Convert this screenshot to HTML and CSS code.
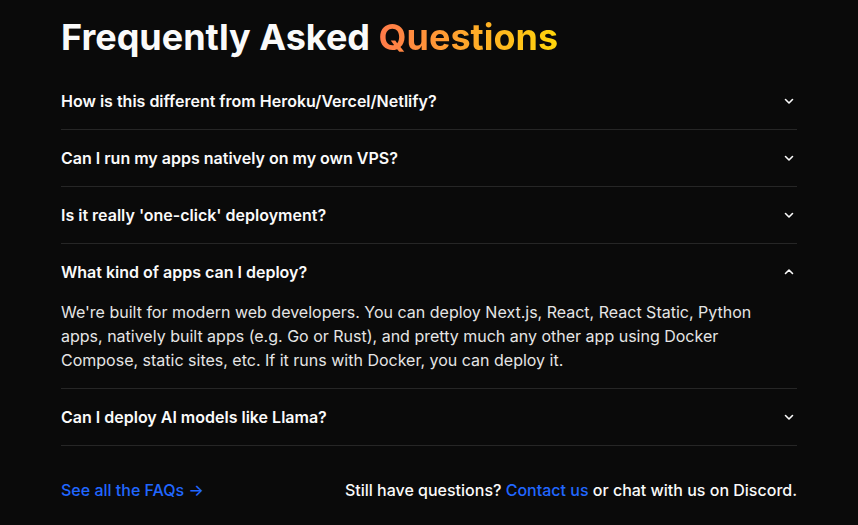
FILE: index.html
```html
<!DOCTYPE html>
<html lang="en">
<head>
  <meta charset="UTF-8">
  <meta name="viewport" content="width=device-width, initial-scale=1.0">
  <title>FAQ</title>
  <link rel="stylesheet" href="styles.css">
</head>
<body>
  <section class="faq">
    <h2 class="faq_title">Frequently Asked <span class="accent">Questions</span></h2>

    <div class="faq_list">
      <div class="faq_item">
        <div class="faq_q">
          <span>How is this different from Heroku/Vercel/Netlify?</span>
          <svg class="chev" viewBox="0 0 16 16"><path d="M4.5 6.5 8 10l3.5-3.5"/></svg>
        </div>
      </div>
      <div class="faq_item">
        <div class="faq_q">
          <span>Can I run my apps natively on my own VPS?</span>
          <svg class="chev" viewBox="0 0 16 16"><path d="M4.5 6.5 8 10l3.5-3.5"/></svg>
        </div>
      </div>
      <div class="faq_item">
        <div class="faq_q">
          <span>Is it really 'one-click' deployment?</span>
          <svg class="chev" viewBox="0 0 16 16"><path d="M4.5 6.5 8 10l3.5-3.5"/></svg>
        </div>
      </div>
      <div class="faq_item open">
        <div class="faq_q">
          <span>What kind of apps can I deploy?</span>
          <svg class="chev" viewBox="0 0 16 16"><path d="M4.5 9.5 8 6l3.5 3.5"/></svg>
        </div>
        <p class="faq_a">We're built for modern web developers. You can deploy Next.js, React, React Static, Python apps, natively built apps (e.g. Go or Rust), and pretty much any other app using Docker Compose, static sites, etc. If it runs with Docker, you can deploy it.</p>
      </div>
      <div class="faq_item">
        <div class="faq_q">
          <span>Can I deploy AI models like Llama?</span>
          <svg class="chev" viewBox="0 0 16 16"><path d="M4.5 6.5 8 10l3.5-3.5"/></svg>
        </div>
      </div>
    </div>

    <div class="faq_footer">
      <a href="#" class="link">See all the FAQs &rarr;</a>
      <p class="more">Still have questions? <a href="#" class="link">Contact us</a> or chat with us on Discord.</p>
    </div>
  </section>
</body>
</html>
```

FILE: styles.css
```css
body{
  margin: 0;
  background-color: #0a0a0a;
  color: #fafafa;
  font-family: Inter, "Noto Sans", sans-serif;
}

.faq{
  width: 736px;
  margin: 0 auto;
  padding-top: 17px;
}

.faq_title{
  margin: 0 0 16px;
  font-size: 36px;
  line-height: 40px;
  font-weight: 700;
}

.accent{
  background: linear-gradient(90deg, #ff7a4a, #ffd60a);
  -webkit-background-clip: text;
  background-clip: text;
  color: transparent;
}

.faq_item{
  border-bottom: 1px solid #262626;
}

.faq_q{
  display: flex;
  justify-content: space-between;
  align-items: center;
  padding: 16px 0;
  font-size: 16px;
  line-height: 24px;
  font-weight: 600;
}

.chev{
  width: 16px;
  height: 16px;
  fill: none;
  stroke: #fafafa;
  stroke-width: 1.6;
  stroke-linecap: round;
  stroke-linejoin: round;
}

.faq_a{
  margin: 0;
  padding: 0 0 16px;
  font-size: 16px;
  line-height: 24px;
  color: #e5e5e5;
}

.faq_footer{
  display: flex;
  justify-content: space-between;
  align-items: center;
  margin-top: 32px;
  font-size: 16px;
  line-height: 24px;
  font-weight: 500;
}

.more{
  margin: 0;
}

.link{
  color: #2167ff;
  text-decoration: none;
}
```
